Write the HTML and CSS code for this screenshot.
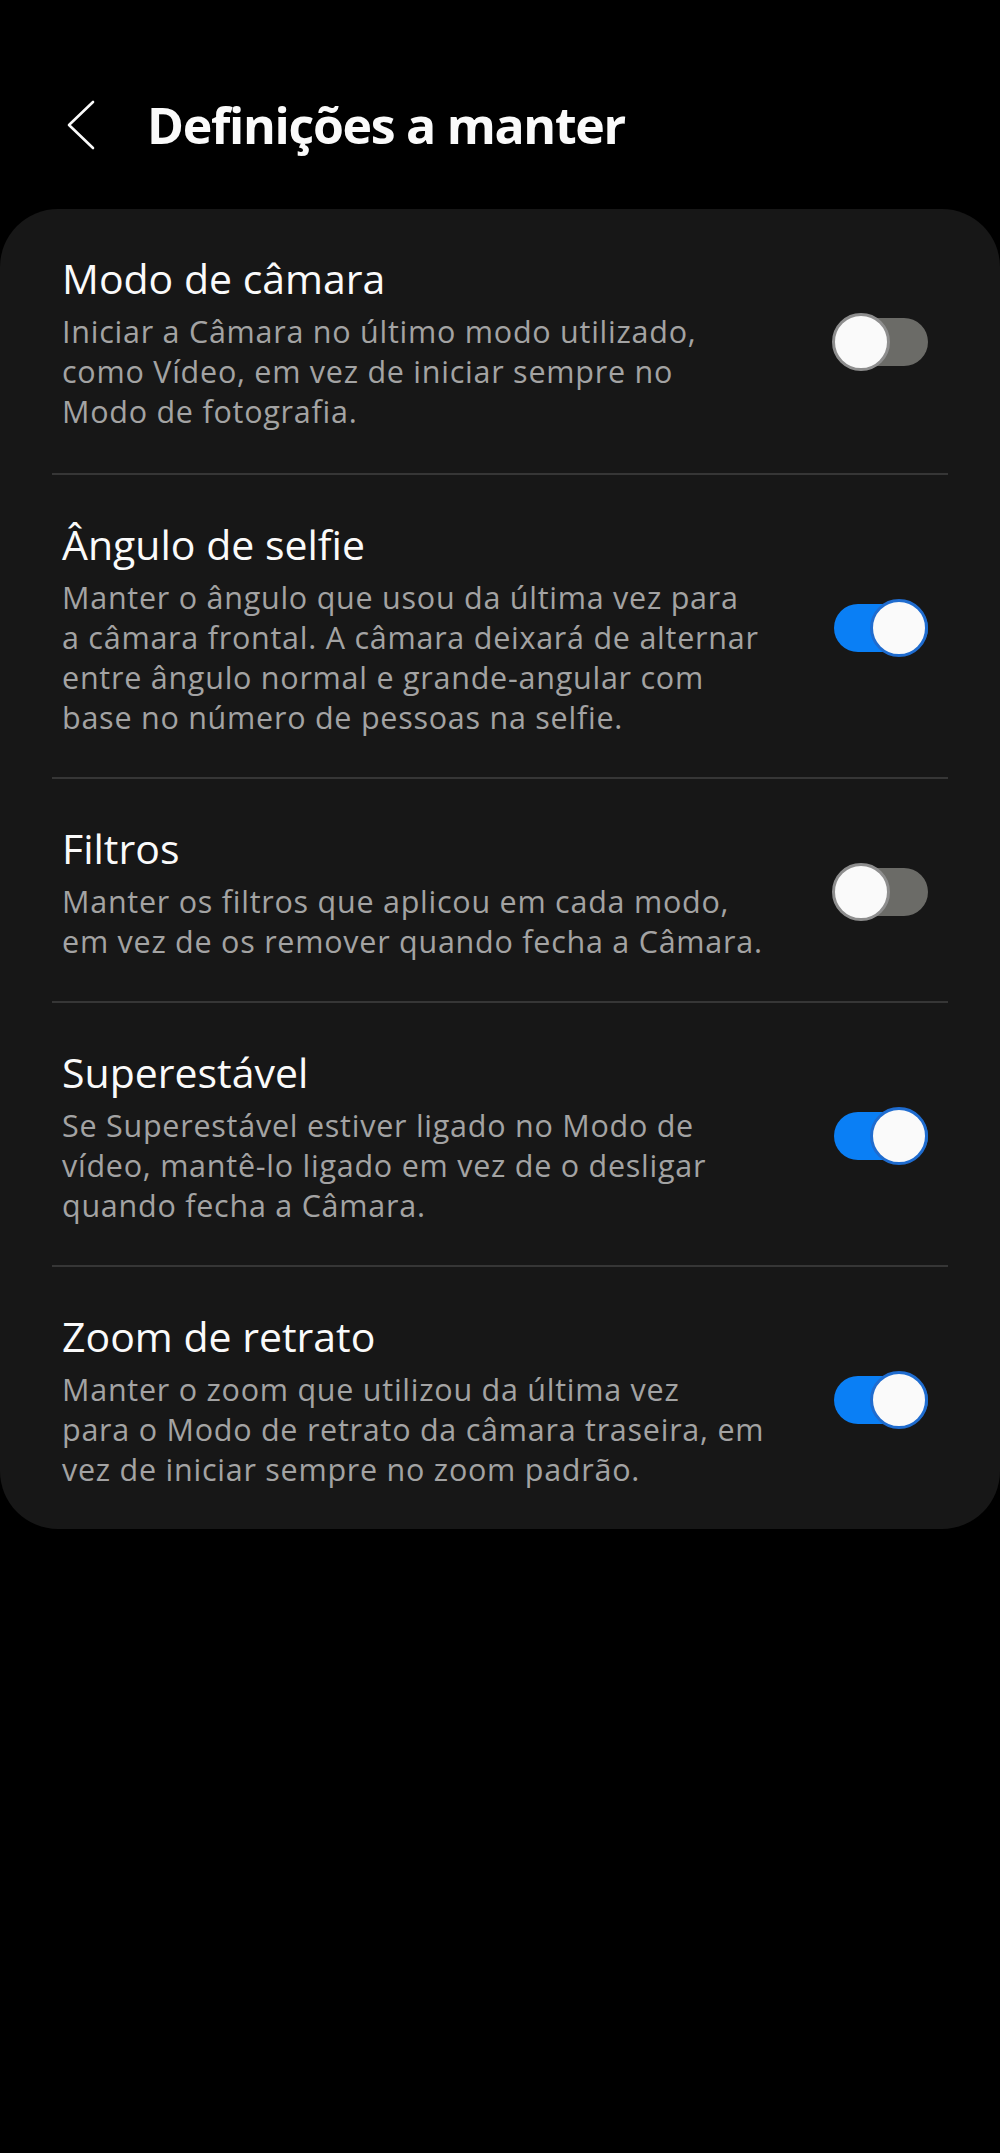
FILE: index.html
```html
<!DOCTYPE html>
<html lang="pt">
<head>
<meta charset="UTF-8">
<meta name="viewport" content="width=device-width, initial-scale=1.0">
<title>Definições a manter</title>
<link rel="stylesheet" href="styles.css">
</head>
<body>
    <div class="header">
        <button class="back" aria-label="Voltar">
            <svg width="28" height="50" viewBox="0 0 28 50">
                <polyline points="26,2 2,25 26,48" fill="none" stroke="#fafafa" stroke-width="2.6" stroke-linecap="round" stroke-linejoin="round"/>
            </svg>
        </button>
        <h1>Definições a manter</h1>
    </div>

    <div class="card">
        <div class="row">
            <div class="text">
                <div class="title">Modo de câmara</div>
                <div class="desc">Iniciar a Câmara no último modo utilizado,<br>como Vídeo, em vez de iniciar sempre no<br>Modo de fotografia.</div>
            </div>
            <div class="toggle"><span class="thumb"></span></div>
        </div>
        <div class="divider"></div>
        <div class="row">
            <div class="text">
                <div class="title">Ângulo de selfie</div>
                <div class="desc">Manter o ângulo que usou da última vez para<br>a câmara frontal. A câmara deixará de alternar<br>entre ângulo normal e grande-angular com<br>base no número de pessoas na selfie.</div>
            </div>
            <div class="toggle on"><span class="thumb"></span></div>
        </div>
        <div class="divider"></div>
        <div class="row">
            <div class="text">
                <div class="title">Filtros</div>
                <div class="desc">Manter os filtros que aplicou em cada modo,<br>em vez de os remover quando fecha a Câmara.</div>
            </div>
            <div class="toggle"><span class="thumb"></span></div>
        </div>
        <div class="divider"></div>
        <div class="row">
            <div class="text">
                <div class="title">Superestável</div>
                <div class="desc">Se Superestável estiver ligado no Modo de<br>vídeo, mantê-lo ligado em vez de o desligar<br>quando fecha a Câmara.</div>
            </div>
            <div class="toggle on"><span class="thumb"></span></div>
        </div>
        <div class="divider"></div>
        <div class="row">
            <div class="text">
                <div class="title">Zoom de retrato</div>
                <div class="desc">Manter o zoom que utilizou da última vez<br>para o Modo de retrato da câmara traseira, em<br>vez de iniciar sempre no zoom padrão.</div>
            </div>
            <div class="toggle on"><span class="thumb"></span></div>
        </div>
    </div>
</body>
</html>
```

FILE: styles.css
```css
body {
    margin: 0;
    background: #000;
    color: #fafafa;
    font-family: "Open Sans", "Noto Sans", sans-serif;
}
.header {
    display: flex;
    align-items: center;
    padding: 95px 0 0 67px;
    margin-bottom: 54px;
}
.back {
    display: flex;
    background: none;
    border: none;
    padding: 0;
    margin-right: 52px;
    cursor: pointer;
}
.header h1 {
    margin: 0;
    font-size: 50px;
    line-height: 60px;
    font-weight: 700;
    letter-spacing: -1.3px;
}
.card {
    background: #171717;
    border-radius: 58px;
}
.row {
    display: flex;
    align-items: center;
    padding: 44px 72px 40px 62px;
}
.row:first-child {
    padding-bottom: 42px;
}
.text {
    flex: 1;
}
.title {
    font-size: 41px;
    line-height: 50px;
    color: #fafafa;
}
.desc {
    margin-top: 8px;
    font-size: 30.5px;
    line-height: 40px;
    letter-spacing: 0.75px;
    color: #a3a3a3;
}
.divider {
    height: 2px;
    margin: 0 52px;
    background: #363636;
}
.toggle {
    position: relative;
    width: 96px;
    height: 58px;
    flex-shrink: 0;
}
.toggle::before {
    content: "";
    position: absolute;
    left: 2px;
    right: 0;
    top: 5px;
    height: 48px;
    border-radius: 24px;
    background: #6b6b67;
}
.thumb {
    position: absolute;
    left: 0;
    top: 0;
    width: 52px;
    height: 52px;
    border: 3px solid #8e8e8e;
    border-radius: 50%;
    background: #fafafa;
}
.toggle.on::before {
    background: #0a7ff5;
}
.toggle.on .thumb {
    left: auto;
    right: 0;
    border-color: #1f6ccf;
}
```
